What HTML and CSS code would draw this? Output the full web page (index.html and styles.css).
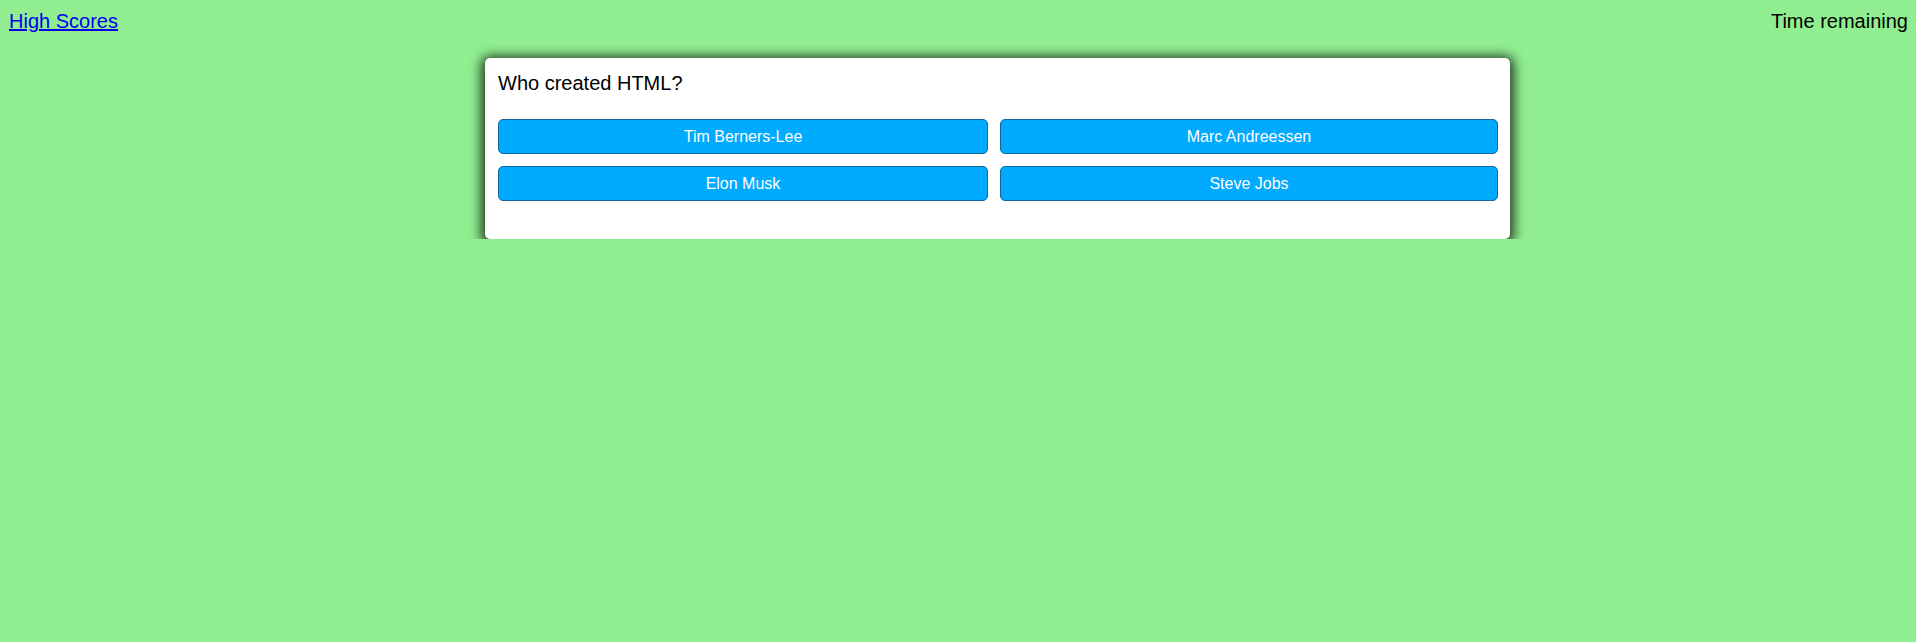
FILE: index.html
```html
<!DOCTYPE html>
<html lang="en">
<head>
<meta charset="utf-8">
<title>Quiz</title>
<link rel="stylesheet" href="styles.css">
</head>
<body>
<header class="topbar">
  <a class="scores-link" href="#">High Scores</a>
  <div class="timer">Time remaining</div>
</header>
<main class="card">
  <h2 class="question">Who created HTML?</h2>
  <div class="answers">
    <button class="answer">Tim Berners-Lee</button>
    <button class="answer">Marc Andreessen</button>
    <button class="answer">Elon Musk</button>
    <button class="answer">Steve Jobs</button>
  </div>
</main>
</body>
</html>
```

FILE: styles.css
```css
html, body {
  background: #90ee90;
}
body {
  margin: 8px;
  font-family: "Liberation Sans", Arial, sans-serif;
  font-size: 20px;
  color: #000;
}
.topbar {
  display: flex;
  justify-content: space-between;
  align-items: flex-start;
  padding: 2px 0 0 1px;
  line-height: 23px;
}
.scores-link {
  color: #0000ee;
  text-decoration: underline;
}
.timer {
  color: #000;
}
.card {
  box-sizing: border-box;
  width: 1025px;
  margin: 25px 0 0 477px;
  padding: 14px 12px 38px 13px;
  background: #fff;
  border-radius: 5px;
  box-shadow: 0 2px 12px 4px rgba(0, 0, 0, 0.75);
}
.question {
  margin: 0 0 24px;
  font-size: 20px;
  font-weight: normal;
  line-height: 23px;
}
.answers {
  display: grid;
  grid-template-columns: 490px 498px;
  grid-auto-rows: 35px;
  gap: 12px;
}
.answer {
  box-sizing: border-box;
  height: 35px;
  padding: 0;
  border: 1px solid #14689c;
  border-radius: 5px;
  background: #00aaff;
  color: #fff;
  font-family: "Liberation Sans", Arial, sans-serif;
  font-size: 16px;
  line-height: 18px;
  cursor: pointer;
}
```
